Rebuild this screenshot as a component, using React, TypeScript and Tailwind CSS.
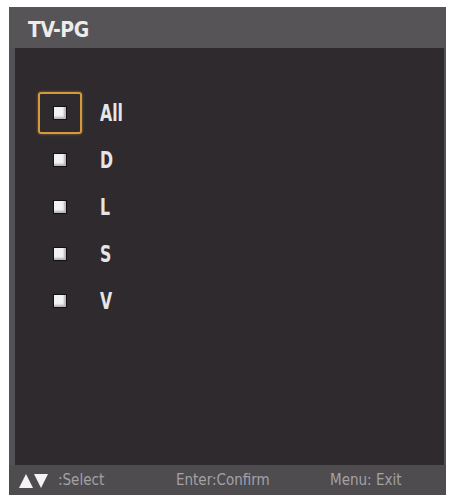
const ratings = ["All", "D", "L", "S", "V"];

function Box({ focused }: { focused: boolean }) {
  return (
    <div
      className={`flex h-[42px] w-[44px] items-center justify-center rounded-[3px] border-2 ${
        focused ? "border-[#d49a3c] shadow-[0_0_3px_rgba(212,154,60,0.6)]" : "border-transparent"
      }`}
    >
      <span className="block h-[14px] w-[14px] border border-[#111] bg-[#f2f2f2] shadow-[inset_-2px_-2px_2px_rgba(0,0,0,0.25)]" />
    </div>
  );
}

// up/down arrows shown next to "Select" in the key hints
function Arrows() {
  return (
    <svg width="30" height="15" viewBox="0 0 30 15" className="shrink-0">
      <polygon points="0,15 7,1 14,15" fill="#f4f4f4" />
      <polygon points="15,1 29,1 22,15" fill="#f4f4f4" />
    </svg>
  );
}

export default function App() {
  return (
    <div className="h-[498px] w-[451px] bg-white pl-[9px] pt-[7px]">
      <div className="flex h-[488px] w-[437px] flex-col bg-[#535155] font-['DejaVu_Sans_Condensed','Liberation_Sans',sans-serif]">
        <div className="flex h-[41px] shrink-0 items-center bg-[#575458] pl-[19px] pt-[6px]">
          <span className="text-[21px] font-bold tracking-[-0.5px] text-[#ececec]">TV-PG</span>
        </div>
        <div className="ml-[6px] mr-[2px] flex flex-1 flex-col gap-[5px] bg-[#2e2a2e] pl-[23px] pt-[44px]">
          {ratings.map((r, i) => (
            <div key={r} className="flex items-center gap-[18px]">
              <Box focused={i === 0} />
              <span className="origin-left scale-x-[0.76] text-[23px] font-bold text-[#e6e6e6]">{r}</span>
            </div>
          ))}
        </div>
        <div className="flex h-[30px] shrink-0 items-center bg-[#4f4c50] pl-[10px] text-[15px] text-[#a3a1a4]">
          <span className="flex w-[157px] items-center gap-[9px]">
            <Arrows />
            <span>:Select</span>
          </span>
          <span className="w-[154px]">Enter:Confirm</span>
          <span>Menu: Exit</span>
        </div>
      </div>
    </div>
  );
}
